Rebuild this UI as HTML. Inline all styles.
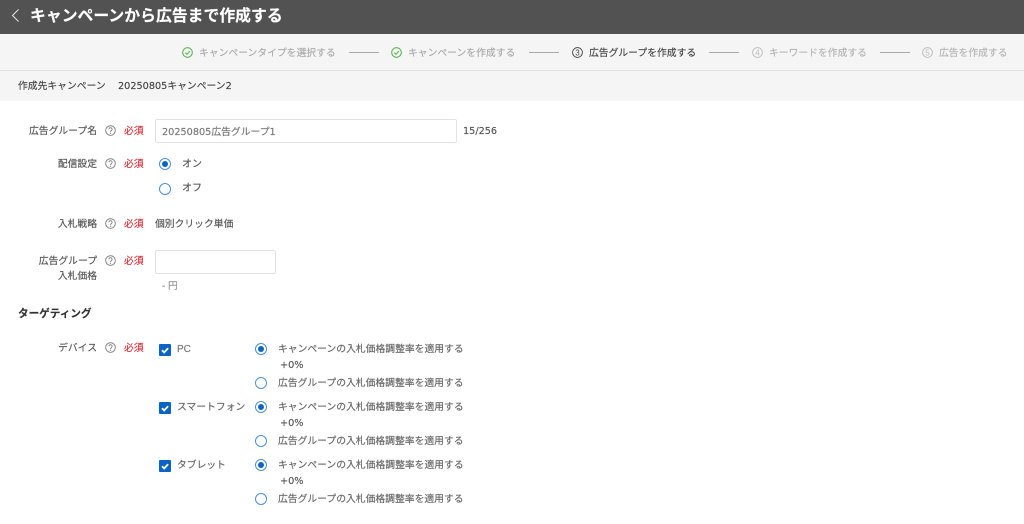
<!DOCTYPE html>
<html lang="ja"><head><meta charset="utf-8"><title>広告グループ作成</title>
<style>
html,body{margin:0;padding:0;background:#fff}
body{width:1024px;height:524px;overflow:hidden;position:relative;font-family:"Liberation Sans","Noto Sans CJK JP",sans-serif;font-size:9.8px;color:#555}
.t{position:absolute;line-height:14px;height:14px;white-space:nowrap;margin-top:-5px;-webkit-text-stroke:.15px currentColor}
.r{text-align:right;width:90px;left:7px;color:#555}
.s{color:#aaa}
.l{position:absolute;top:52px;height:1px;background:#aaa}
.n{font-family:"DejaVu Sans","Noto Sans CJK JP",sans-serif;font-size:9.7px}
.w{font-size:9.8px;color:#666}
.q,.c,.ra,.rb{position:absolute}
.q{left:105px;width:11px;height:11px}
.req{left:124px;color:#d8303a}
.rb,.ra{width:10px;height:10px;border:1px solid #4a90d9;border-radius:50%;background:#fff}
.ra:after{content:"";position:absolute;left:2px;top:2px;width:6px;height:6px;border-radius:50%;background:#0a64c8}
.c{left:159px;width:12px;height:12px;background:#0a64c8;border-radius:1px}
.in{position:absolute;box-sizing:border-box;border:1px solid #e2e2e2;border-radius:2px;background:#fff}
</style></head><body>
<svg width="0" height="0" style="position:absolute"><defs>
<symbol id="h" viewBox="0 0 11 11"><circle cx="5.5" cy="5.5" r="4.8" fill="none" stroke="#777" stroke-width=".9"/><path d="M3.9 4.3a1.6 1.6 0 1 1 2.5 1.3c-.6.4-.9.7-.9 1.3" fill="none" stroke="#777" stroke-width=".9"/><circle cx="5.5" cy="8.2" r=".6" fill="#777"/></symbol>
<symbol id="k" viewBox="0 0 11 11"><circle cx="5.5" cy="5.5" r="4.8" fill="none" stroke="#5cb85c" stroke-width="1.1"/><path d="M3.2 5.6l1.7 1.7 3-3.2" fill="none" stroke="#5cb85c" stroke-width="1.1"/></symbol>
<symbol id="m" viewBox="0 0 12 12"><path d="M3 6.2l2.2 2.2 3.9-4.2" fill="none" stroke="#fff" stroke-width="1.8"/></symbol>
</defs></svg>

<div style="position:absolute;left:0;top:0;width:1024px;height:34px;background:#525252"></div>
<svg style="position:absolute;left:10px;top:8px" width="10" height="15" viewBox="0 0 10 15"><path d="M8.5 1.5L2.5 7.5l6 6" fill="none" stroke="#ddd" stroke-width="1.1"/></svg>
<div class="t" style="left:30px;top:15px;font-size:15.85px;line-height:20px;height:20px;margin-top:-8px;font-weight:700;color:#fff">キャンペーンから広告まで作成する</div>

<div style="position:absolute;left:0;top:34px;width:1024px;height:67px;background:#f5f5f5"></div>
<div style="position:absolute;left:0;top:70px;width:1024px;height:1px;background:#e2e2e2"></div>

<svg style="position:absolute;left:182px;top:47px" width="11" height="11"><use href="#k"/></svg>
<div class="t s" style="left:199px;top:52px">キャンペーンタイプを選択する</div>
<div class="l" style="left:349px;width:30px"></div>
<svg style="position:absolute;left:391px;top:47px" width="11" height="11"><use href="#k"/></svg>
<div class="t s" style="left:408px;top:52px">キャンペーンを作成する</div>
<div class="l" style="left:529px;width:30px"></div>
<svg style="position:absolute;left:572px;top:47px" width="11" height="11"><circle cx="5.5" cy="5.5" r="4.9" fill="none" stroke="#444" stroke-width=".9"/><text x="5.5" y="8.3" text-anchor="middle" font-size="8" fill="#444" font-family="Liberation Sans">3</text></svg>
<div class="t" style="left:589px;top:52px;color:#444">広告グループを作成する</div>
<div class="l" style="left:709px;width:30px"></div>
<svg style="position:absolute;left:752px;top:47px" width="11" height="11"><circle cx="5.5" cy="5.5" r="4.9" fill="none" stroke="#bbb" stroke-width=".9"/><text x="5.5" y="8.3" text-anchor="middle" font-size="8" fill="#bbb" font-family="Liberation Sans">4</text></svg>
<div class="t" style="left:769px;top:52px;color:#b4b4b4">キーワードを作成する</div>
<div class="l" style="left:880px;width:30px"></div>
<svg style="position:absolute;left:922px;top:47px" width="11" height="11"><circle cx="5.5" cy="5.5" r="4.9" fill="none" stroke="#bbb" stroke-width=".9"/><text x="5.5" y="8.3" text-anchor="middle" font-size="8" fill="#bbb" font-family="Liberation Sans">5</text></svg>
<div class="t" style="left:939px;top:52px;color:#b4b4b4">広告を作成する</div>

<div class="t" style="left:18px;top:85px;color:#444">作成先キャンペーン</div>
<div class="t n" style="left:118px;top:85px;color:#444">20250805<span style="font-size:9.8px">キャンペーン</span>2</div>

<div class="t r" style="top:130px">広告グループ名</div>
<svg class="q" style="top:125px"><use href="#h"/></svg>
<div class="t req" style="top:130px">必須</div>
<div class="in" style="left:155px;top:119px;width:302px;height:24px"></div>
<div class="t n" style="left:162px;top:131px;color:#777">20250805<span style="font-size:9.8px">広告グループ</span>1</div>
<div class="t n" style="left:463px;top:130px;color:#555">15/256</div>

<div class="t r" style="top:163px">配信設定</div>
<svg class="q" style="top:158px"><use href="#h"/></svg>
<div class="t req" style="top:163px">必須</div>
<div class="ra" style="left:159px;top:158px"></div>
<div class="t" style="left:182px;top:163px;font-size:10px">オン</div>
<div class="rb" style="left:159px;top:183px"></div>
<div class="t" style="left:182px;top:187px;font-size:10px">オフ</div>

<div class="t r" style="top:223px">入札戦略</div>
<svg class="q" style="top:218px"><use href="#h"/></svg>
<div class="t req" style="top:223px">必須</div>
<div class="t" style="left:155px;top:223px">個別クリック単価</div>

<div class="t r" style="top:260px">広告グループ</div>
<div class="t r" style="top:275px">入札価格</div>
<svg class="q" style="top:255px"><use href="#h"/></svg>
<div class="t req" style="top:260px">必須</div>
<div class="in" style="left:155px;top:250px;width:121px;height:24px"></div>
<div class="t" style="left:162px;top:285px;color:#999">- 円</div>

<div class="t" style="left:18px;top:312px;font-size:10.6px;font-weight:700;color:#333">ターゲティング</div>

<div class="t r" style="top:347px">デバイス</div>
<svg class="q" style="top:342px"><use href="#h"/></svg>
<div class="t req" style="top:347px">必須</div>

<div class="c" style="top:344px"><svg width="12" height="12" style="display:block"><use href="#m"/></svg></div>
<div class="t" style="left:177px;top:348px;font-size:10px;color:#777">PC</div>
<div class="ra" style="left:255px;top:343px"></div>
<div class="t w" style="left:278px;top:348px">キャンペーンの入札価格調整率を適用する</div>
<div class="t n" style="left:280px;top:364px">+0%</div>
<div class="rb" style="left:255px;top:377px"></div>
<div class="t w" style="left:278px;top:382px">広告グループの入札価格調整率を適用する</div>

<div class="c" style="top:402px"><svg width="12" height="12" style="display:block"><use href="#m"/></svg></div>
<div class="t w" style="left:177px;top:406px">スマートフォン</div>
<div class="ra" style="left:255px;top:401px"></div>
<div class="t w" style="left:278px;top:406px">キャンペーンの入札価格調整率を適用する</div>
<div class="t n" style="left:280px;top:422px">+0%</div>
<div class="rb" style="left:255px;top:435px"></div>
<div class="t w" style="left:278px;top:440px">広告グループの入札価格調整率を適用する</div>

<div class="c" style="top:460px"><svg width="12" height="12" style="display:block"><use href="#m"/></svg></div>
<div class="t w" style="left:177px;top:464px">タブレット</div>
<div class="ra" style="left:255px;top:459px"></div>
<div class="t w" style="left:278px;top:464px">キャンペーンの入札価格調整率を適用する</div>
<div class="t n" style="left:280px;top:480px">+0%</div>
<div class="rb" style="left:255px;top:493px"></div>
<div class="t w" style="left:278px;top:498px">広告グループの入札価格調整率を適用する</div>
</body></html>
